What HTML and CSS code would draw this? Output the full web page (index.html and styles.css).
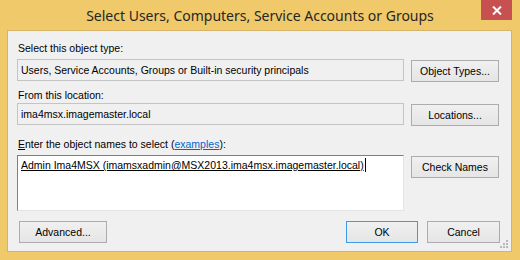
FILE: index.html
```html
<!DOCTYPE html>
<html lang="en">
<head>
    <meta charset="UTF-8">
    <title>Select Users, Computers, Service Accounts or Groups</title>
    <link rel="stylesheet" href="styles.css">
</head>
<body>

    <div class="window">
        <!-- Title bar -->
        <div class="titlebar">
            <span></span>
            <div class="title">Select Users, Computers, Service Accounts or Groups</div>
            <div class="titlebar-controls">
                <button class="close-btn" aria-label="Close">
                    <svg width="10" height="9" viewBox="0 0 10 9">
                        <path d="M1 0.5 L9 8.5 M9 0.5 L1 8.5" stroke="#fff" stroke-width="2"/>
                    </svg>
                </button>
            </div>
        </div>

        <!-- Dialog body -->
        <div class="client">
            <div class="field-label label-type">Select this object type:</div>
            <div class="field-row">
                <div class="readonly-box">Users, Service Accounts, Groups or Built-in security principals</div>
                <button class="btn">Object Types...</button>
            </div>

            <div class="field-label label-location">From this location:</div>
            <div class="field-row">
                <div class="readonly-box">ima4msx.imagemaster.local</div>
                <button class="btn">Locations...</button>
            </div>

            <div class="field-label label-names"><u>E</u>nter the object names to select (<a href="#">examples</a>):</div>
            <div class="field-row">
                <div class="names-box"><span class="resolved">Admin Ima4MSX (imamsxadmin@MSX2013.ima4msx.imagemaster.local)</span><span class="caret"></span></div>
                <button class="btn">Check Names</button>
            </div>

            <div class="footer">
                <button class="btn btn-advanced">Advanced...</button>
                <div class="footer-right">
                    <button class="btn btn-small btn-default">OK</button>
                    <button class="btn btn-small">Cancel</button>
                </div>
            </div>

            <svg class="grip" width="9" height="9" viewBox="0 0 9 9">
                <rect x="6" y="0" width="2" height="2" fill="#b8b8b8"/>
                <rect x="3" y="3" width="2" height="2" fill="#b8b8b8"/>
                <rect x="6" y="3" width="2" height="2" fill="#b8b8b8"/>
                <rect x="0" y="6" width="2" height="2" fill="#b8b8b8"/>
                <rect x="3" y="6" width="2" height="2" fill="#b8b8b8"/>
                <rect x="6" y="6" width="2" height="2" fill="#b8b8b8"/>
            </svg>
        </div>
    </div>

</body>
</html>
```

FILE: styles.css
```css
* {
    margin: 0;
    padding: 0;
    box-sizing: border-box;
}

:root {
    --frame-color: #f0c96a;
    --frame-edge: #d5b46a;
    --face-color: #f0f0f0;
    --btn-border: #acacac;
    --text-primary: #000000;
}

body {
    width: 520px;
    height: 260px;
    background-color: var(--frame-color);
    font-family: "Liberation Sans", Arial, sans-serif;
    font-size: 10.5px;
    color: var(--text-primary);
    overflow: hidden;
}

.window {
    height: 260px;
    display: flex;
    flex-direction: column;
}

/* Title bar */
.titlebar {
    height: 30px;
    display: grid;
    grid-template-columns: 1fr auto 1fr;
}

.title {
    font-family: "Noto Sans", "Open Sans", sans-serif;
    font-size: 14px;
    color: #262626;
    padding-top: 6px;
    white-space: nowrap;
}

.titlebar-controls {
    display: flex;
    justify-content: flex-end;
    align-items: flex-start;
    padding-right: 8px;
}

.close-btn {
    width: 31px;
    height: 20px;
    background-color: #c75050;
    border: none;
    display: flex;
    justify-content: center;
    align-items: center;
}

/* Client area */
.client {
    position: relative;
    height: 222px;
    margin: 0 8px 0 7px;
    border: 1px solid var(--frame-edge);
    background-color: var(--face-color);
    padding: 11px 11px 0 9px;
}

.field-label {
    line-height: 13px;
    padding-left: 1px;
}

.label-type {
    margin-bottom: 4px;
}

.label-location {
    margin-top: 7px;
    margin-bottom: 1px;
}

.label-names {
    margin-top: 12px;
    margin-bottom: 4px;
}

.field-label u {
    text-decoration: underline;
}

.field-label a {
    color: #0066cc;
    text-decoration: underline;
}

.field-row {
    display: grid;
    grid-template-columns: 387px 88px;
    column-gap: 7px;
    align-items: start;
}

.readonly-box {
    height: 22px;
    border: 1px solid #c4c4c4;
    background-color: var(--face-color);
    padding: 0 3px;
    line-height: 20px;
    white-space: nowrap;
    overflow: hidden;
}

.field-row .btn {
    margin-top: 1px;
}

.names-box {
    height: 56px;
    background-color: #ffffff;
    border-style: solid;
    border-width: 1px;
    border-color: #7f7f7f #e3e3e3 #e3e3e3 #7f7f7f;
    padding: 2px 3px;
    line-height: 14px;
    white-space: nowrap;
    display: flex;
    align-items: flex-start;
}

.resolved {
    text-decoration: underline;
}

.caret {
    width: 1px;
    height: 14px;
    background-color: #000;
    margin-left: 1px;
}

/* Buttons */
.btn {
    height: 22px;
    width: 88px;
    border: 1px solid var(--btn-border);
    background: linear-gradient(#f0f0f0, #e5e5e5);
    font-family: "Liberation Sans", Arial, sans-serif;
    font-size: 10.5px;
    color: var(--text-primary);
}

.btn-small {
    width: 73px;
}

.btn-default {
    width: 72px;
    border-color: #3c9ae8;
}

.footer {
    margin-top: 10px;
    display: flex;
    justify-content: space-between;
}

.btn-advanced {
    margin-left: 2px;
}

.footer-right {
    display: flex;
    gap: 9px;
}

.grip {
    position: absolute;
    right: 2px;
    bottom: 2px;
}
```
